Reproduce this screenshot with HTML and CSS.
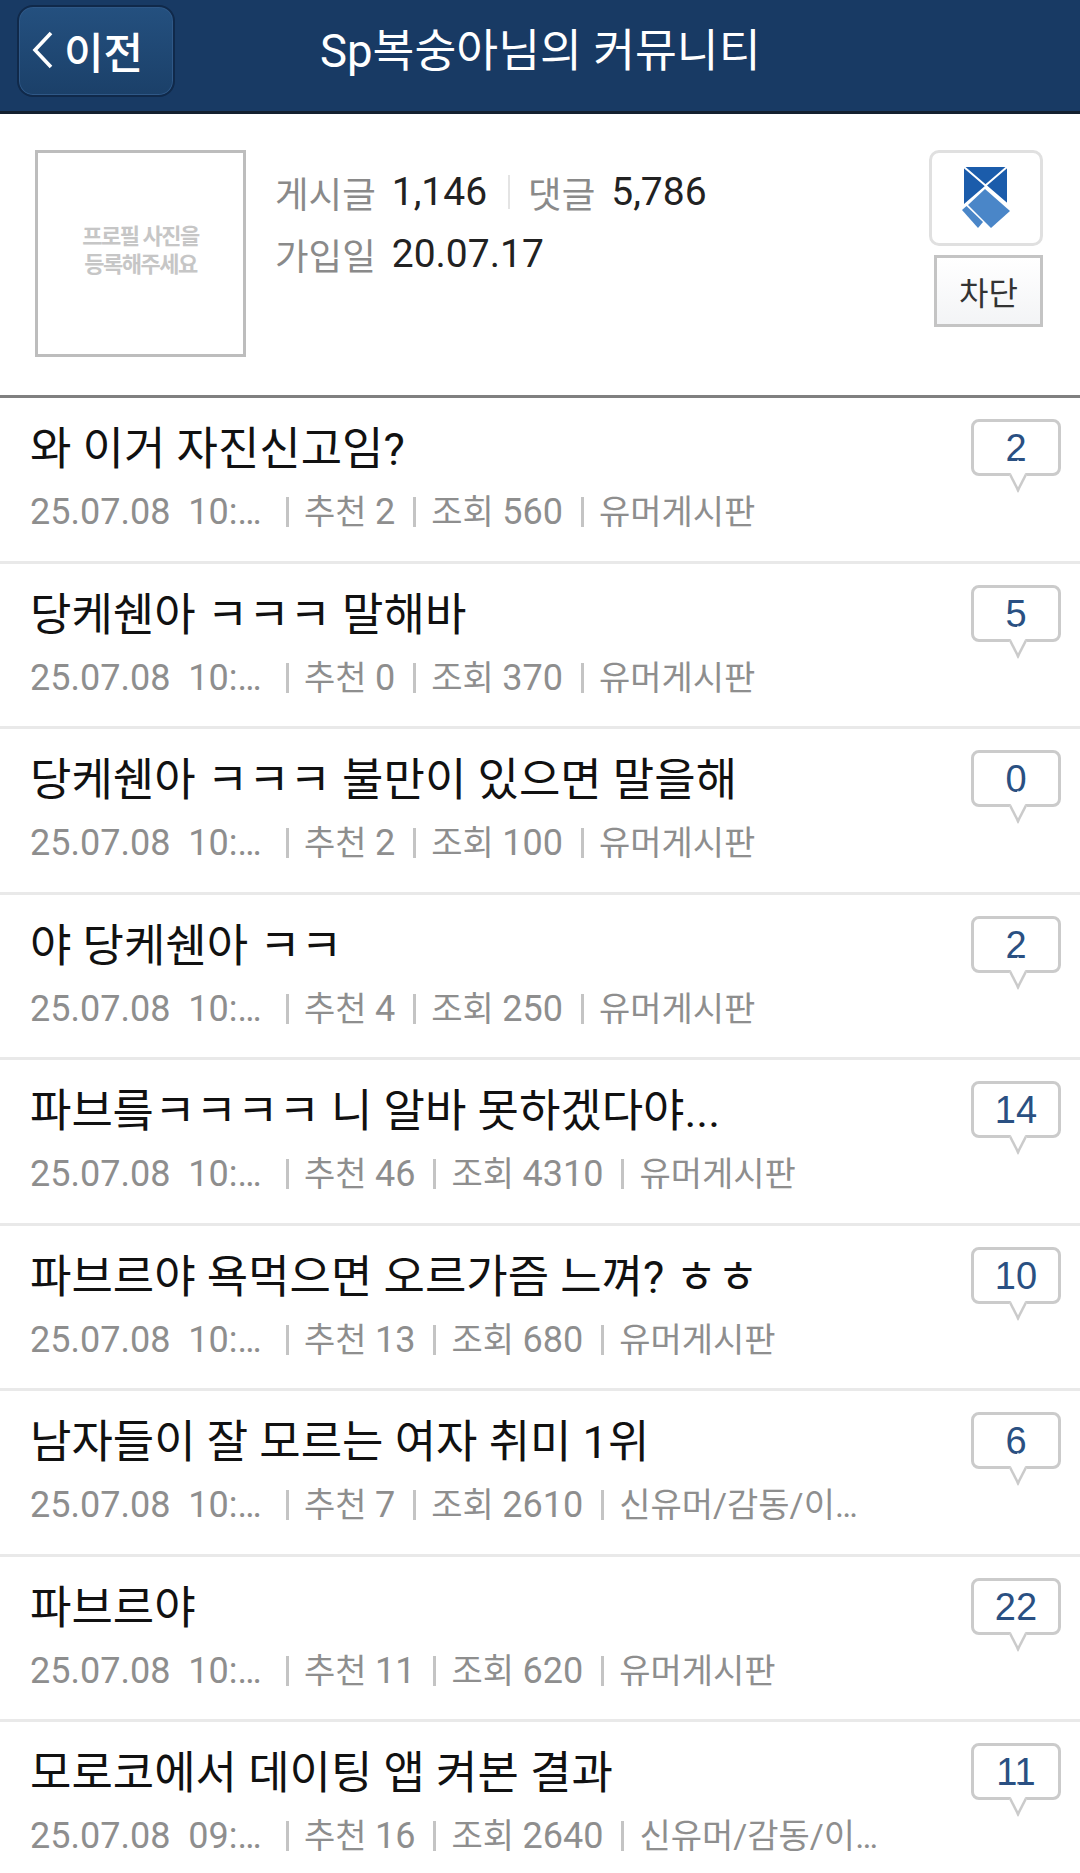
FILE: index.html
```html
<!DOCTYPE html>
<html lang="ko">
<head>
    <meta charset="UTF-8">
    <meta name="viewport" content="width=device-width, initial-scale=1.0">
    <title>Sp복숭아님의 커뮤니티</title>
    <link rel="stylesheet" href="styles.css">
</head>
<body>
    <header class="topbar">
        <a class="back-btn">
            <svg class="back-icon" viewBox="0 0 22 40" width="22" height="40"><path d="M19 3 L3 20 L19 37" fill="none" stroke="#fff" stroke-width="3.6"/></svg>
            <span>이전</span>
        </a>
        <h1>Sp복숭아님의 커뮤니티</h1>
    </header>

    <section class="profile">
        <div class="photo">프로필 사진을<br>등록해주세요</div>
        <div class="stats">
            <p><span class="label">게시글</span><span class="value">1,146</span><i class="stat-sep"></i><span class="label">댓글</span><span class="value">5,786</span></p>
            <p><span class="label">가입일</span><span class="value">20.07.17</span></p>
        </div>
        <div class="profile-actions">
            <a class="note-btn">
                <svg viewBox="0 0 49 62" width="49" height="62">
                    <path d="M2 0 H45 V37 L23.500 18.500 L2 37 Z" fill="#1b5cab"/>
                    <path d="M2 0 L45 37 M45 0 L23.500 18.500" fill="none" stroke="#fff" stroke-width="2"/>
                    <path d="M23 22 L48 44 L29 61 L6 38 Z" fill="#4a86c8"/>
                    <path d="M0 43 L4.500 39 L21 55 L16 61 Z" fill="#4a86c8"/>
                </svg>
            </a>
            <a class="block-btn">차단</a>
        </div>
    </section>

    <ul class="post-list">
        <li class="post">
            <div class="post-main">
                <div class="post-title">와 이거 자진신고임?</div>
                <div class="post-meta"><b>25.07.08  10:…</b><span>추천 <b>2</b></span><span>조회 <b>560</b></span><span>유머게시판</span></div>
            </div>
            <div class="reply-count">2</div>
        </li>
        <li class="post">
            <div class="post-main">
                <div class="post-title">당케쉔아 ㅋㅋㅋ 말해바</div>
                <div class="post-meta"><b>25.07.08  10:…</b><span>추천 <b>0</b></span><span>조회 <b>370</b></span><span>유머게시판</span></div>
            </div>
            <div class="reply-count">5</div>
        </li>
        <li class="post">
            <div class="post-main">
                <div class="post-title">당케쉔아 ㅋㅋㅋ 불만이 있으면 말을해</div>
                <div class="post-meta"><b>25.07.08  10:…</b><span>추천 <b>2</b></span><span>조회 <b>100</b></span><span>유머게시판</span></div>
            </div>
            <div class="reply-count">0</div>
        </li>
        <li class="post">
            <div class="post-main">
                <div class="post-title">야 당케쉔아 ㅋㅋ</div>
                <div class="post-meta"><b>25.07.08  10:…</b><span>추천 <b>4</b></span><span>조회 <b>250</b></span><span>유머게시판</span></div>
            </div>
            <div class="reply-count">2</div>
        </li>
        <li class="post">
            <div class="post-main">
                <div class="post-title">파브릌ㅋㅋㅋㅋ 니 알바 못하겠다야...</div>
                <div class="post-meta"><b>25.07.08  10:…</b><span>추천 <b>46</b></span><span>조회 <b>4310</b></span><span>유머게시판</span></div>
            </div>
            <div class="reply-count">14</div>
        </li>
        <li class="post">
            <div class="post-main">
                <div class="post-title">파브르야 욕먹으면 오르가즘 느껴? ㅎㅎ</div>
                <div class="post-meta"><b>25.07.08  10:…</b><span>추천 <b>13</b></span><span>조회 <b>680</b></span><span>유머게시판</span></div>
            </div>
            <div class="reply-count">10</div>
        </li>
        <li class="post">
            <div class="post-main">
                <div class="post-title">남자들이 잘 모르는 여자 취미 1위</div>
                <div class="post-meta"><b>25.07.08  10:…</b><span>추천 <b>7</b></span><span>조회 <b>2610</b></span><span>신유머/감동/이…</span></div>
            </div>
            <div class="reply-count">6</div>
        </li>
        <li class="post">
            <div class="post-main">
                <div class="post-title">파브르야</div>
                <div class="post-meta"><b>25.07.08  10:…</b><span>추천 <b>11</b></span><span>조회 <b>620</b></span><span>유머게시판</span></div>
            </div>
            <div class="reply-count">22</div>
        </li>
        <li class="post">
            <div class="post-main">
                <div class="post-title">모로코에서 데이팅 앱 켜본 결과</div>
                <div class="post-meta"><b>25.07.08  09:…</b><span>추천 <b>16</b></span><span>조회 <b>2640</b></span><span>신유머/감동/이…</span></div>
            </div>
            <div class="reply-count">11</div>
        </li>
    </ul>
</body>
</html>
```

FILE: styles.css
```css
* {
    box-sizing: border-box;
}
html, body {
    height: 100%;
}
body {
    margin: 0;
    padding: 0;
    background-color: #fff;
    font-family: Roboto, "Noto Sans CJK KR", sans-serif;
    overflow: hidden;
}
.topbar {
    display: flex;
    align-items: flex-start;
    height: 114px;
    padding: 5px 17px 0;
    background-color: #183a64;
    border-bottom: 3px solid #13202f;
}
.back-btn {
    display: flex;
    align-items: center;
    gap: 10px;
    width: 158px;
    height: 92px;
    padding: 0 0 3px 13px;
    color: #fff;
    font-size: 43px;
    font-weight: 500;
    background: linear-gradient(#24507f, #1b4069);
    border: 2px solid #10294a;
    border-radius: 16px;
    box-shadow: inset 0 0 0 1px #2f5887;
}
.topbar h1 {
    margin: 0 0 0 145px;
    height: 92px;
    color: #fff;
    font-size: 45.500px;
    font-weight: 400;
    line-height: 93px;
    white-space: nowrap;
}
.profile {
    display: flex;
    height: 284px;
    padding: 36px 37px 0 35px;
    border-bottom: 3px solid #808080;
}
.photo {
    display: flex;
    align-items: center;
    justify-content: center;
    width: 211px;
    height: 207px;
    padding-bottom: 5px;
    border: 3px solid #bdbdbd;
    color: #c6c6c6;
    font-size: 22px;
    font-weight: 700;
    line-height: 28px;
    letter-spacing: -1.500px;
    text-align: center;
}
.stats {
    flex: 1;
    padding: 11px 0 0 29px;
}
.stats p {
    display: flex;
    align-items: center;
    gap: 16px;
    height: 62px;
    margin: 0;
}
.label {
    color: #8a8a8a;
    font-size: 36.500px;
}
.value {
    color: #222;
    font-size: 39px;
}
.stat-sep {
    width: 2px;
    height: 34px;
    margin: 0 2px 0 5px;
    background-color: #e4e4e4;
}
.profile-actions {
    display: flex;
    flex-direction: column;
    align-items: flex-end;
    gap: 9px;
}
.note-btn {
    display: flex;
    align-items: center;
    justify-content: center;
    width: 114px;
    height: 96px;
    border: 3px solid #e0e0e0;
    border-radius: 10px;
}
.block-btn {
    display: flex;
    align-items: center;
    justify-content: center;
    width: 109px;
    height: 72px;
    color: #333;
    font-size: 32px;
    background: linear-gradient(#fff, #f3f4f6);
    border: 3px solid #c4c4c4;
}
.post-list {
    margin: 0;
    padding: 0;
    list-style: none;
}
.post {
    display: flex;
    justify-content: space-between;
    height: 165.500px;
    padding: 21px 19px 0 30px;
    border-bottom: 3px solid #e9e9e9;
}
.post-title {
    height: 62px;
    color: #111;
    font-size: 45px;
    line-height: 62px;
    white-space: nowrap;
}
.post-meta {
    display: flex;
    align-items: baseline;
    height: 62px;
    color: #8e8e8e;
    font-size: 34px;
    line-height: 62px;
    white-space: pre;
}
.post-meta b {
    font-size: 36px;
    font-weight: 400;
}
.post-meta > b {
    flex: none;
    width: 238px;
}
.post-meta span {
    position: relative;
    padding-left: 18px;
    margin-left: 18px;
}
/* little bar in front of each stat */
.post-meta span::before {
    content: "";
    position: absolute;
    left: 0;
    top: 16px;
    width: 3px;
    height: 30px;
    background-color: #c4c4c4;
}
.reply-count {
    position: relative;
    width: 90px;
    height: 57px;
    color: #2a5082;
    font-family: "Liberation Sans", sans-serif;
    font-size: 38px;
    line-height: 52px;
    text-align: center;
    border: 3px solid #cbcbcb;
    border-radius: 8px;
}
.reply-count::after {
    content: "";
    position: absolute;
    left: 35px;
    bottom: -12px;
    width: 15px;
    height: 15px;
    background-color: #fff;
    border-right: 3px solid #cbcbcb;
    border-bottom: 3px solid #cbcbcb;
    transform: rotate(45deg) skew(18deg, 18deg);
}
```
